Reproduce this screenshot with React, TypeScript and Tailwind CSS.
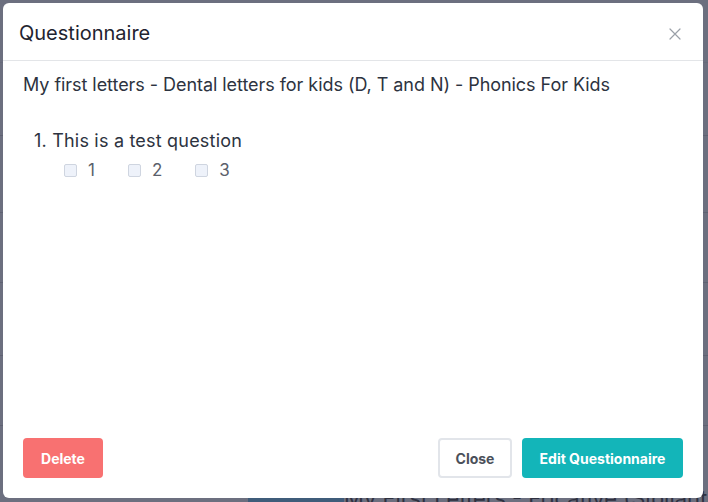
import React from "react";

export default function App() {
  const lines = [135, 212, 282, 355, 425];
  return (
    <div
      className="relative w-[708px] h-[502px] overflow-hidden bg-[#6c6f7f]"
      style={{ fontFamily: "Inter, 'Noto Sans', sans-serif" }}
    >
      {/* dimmed page behind */}
      <div className="flex flex-col">
        <div className="h-[62px]" />
        <div className="h-[73px] border-t border-[#62657476]" />
        <div className="h-[77px] border-t border-[#5f6272]" />
        <div className="h-[70px] border-t border-[#5f6272]" />
        <div className="h-[73px] border-t border-[#5f6272]" />
        <div className="h-[70px] border-t border-[#5f6272]" />
        <div className="h-[77px] border-t border-[#5f6272]" />
      </div>
      <div className="absolute left-[248px] top-[497px] w-[96px] h-[10px] bg-[#3f5c7a]" />
      <div className="absolute left-[344px] top-[484px] text-[22px] leading-[28px] text-[#2f3140] whitespace-nowrap">
        My First Letters - Fricative (Sibilant) Conso
      </div>

      {/* modal */}
      <div className="absolute left-[3px] top-[3px] w-[700px] h-[495px] bg-white rounded-[6px] flex flex-col">
        <div className="h-[58px] shrink-0 border-b border-[#e3e5e8] flex items-center justify-between pl-[16px] pr-[22px]">
          <h2 className="text-[20px] leading-7 mt-[3px] text-[#1f2430] font-normal">Questionnaire</h2>
          <svg width="12" height="12" viewBox="0 0 12 12" className="mt-[4px]">
            <path d="M1 1L11 11M11 1L1 11" stroke="#9aa0a8" strokeWidth="1.2" strokeLinecap="round" />
          </svg>
        </div>
        <div className="flex-1 px-[20px] pt-[12px]">
          <p className="text-[18px] leading-6 text-[#2d3340] tracking-[-0.05px]">
            My first letters - Dental letters for kids (D, T and N) - Phonics For Kids
          </p>
          <div className="mt-[32px] pl-[11px]">
            <p className="text-[18px] leading-6 text-[#2d3340] tracking-[0.2px]">1. This is a test question</p>
            <div className="flex items-center mt-[5px] pl-[30px] gap-[33px]">
              {["1", "2", "3"].map((n) => (
                <label key={n} className="flex items-center gap-[11px] text-[17px] text-[#5b606b] leading-6">
                  <span className="w-[13px] h-[13px] rounded-[2px] border border-[#cfd5e0] bg-[#eef2fa] inline-block" />
                  {n}
                </label>
              ))}
            </div>
          </div>
        </div>
        <div className="shrink-0 flex items-center justify-between px-[20px] pb-[20px]">
          <button className="w-[80px] h-[40px] rounded-[4px] bg-[#f87171] text-white text-[14px] font-bold">
            Delete
          </button>
          <div className="flex gap-[10px]">
            <button className="w-[74px] h-[40px] rounded-[4px] border-2 border-[#e2e5ea] bg-white text-[#4b505a] text-[14px] font-bold">
              Close
            </button>
            <button className="w-[161px] h-[40px] rounded-[4px] bg-[#13b5b9] text-white text-[14px] font-bold">
              Edit Questionnaire
            </button>
          </div>
        </div>
      </div>
    </div>
  );
}
